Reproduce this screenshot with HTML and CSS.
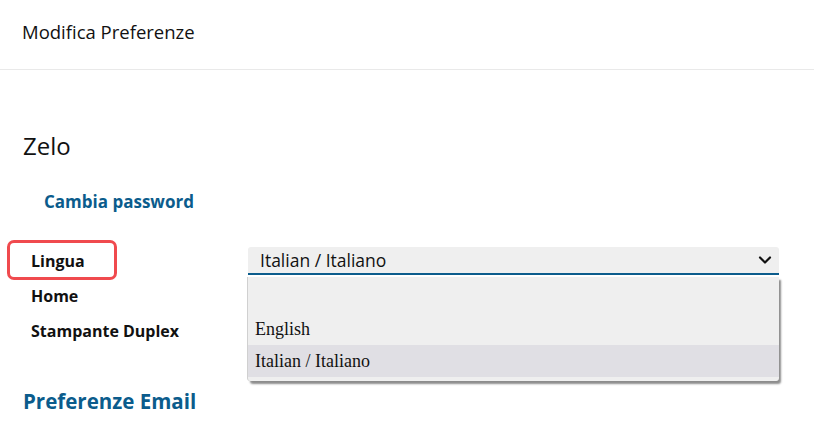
FILE: index.html
```html
<!DOCTYPE html>
<html lang="it">
<head>
<meta charset="utf-8">
<title>Modifica Preferenze</title>
<link rel="stylesheet" href="styles.css">
</head>
<body>
<header class="topbar">Modifica Preferenze</header>
<main class="content">
  <h2 class="user-name">Zelo</h2>
  <a class="change-pw" href="#">Cambia password</a>
  <div class="prefs">
    <div class="pref-row">
      <span class="pref-label highlighted">Lingua</span>
      <div class="select-wrap">
        <div class="select">
          <span class="select-value">Italian / Italiano</span>
          <svg class="chevron" width="14" height="10" viewBox="0 0 14 10"><path d="M2 2.5 L7 7.5 L12 2.5" fill="none" stroke="#111" stroke-width="2.2" stroke-linecap="round" stroke-linejoin="round"/></svg>
        </div>
        <ul class="dropdown">
          <li class="opt"></li>
          <li class="opt">English</li>
          <li class="opt active">Italian / Italiano</li>
        </ul>
      </div>
    </div>
    <div class="pref-row"><span class="pref-label">Home</span></div>
    <div class="pref-row"><span class="pref-label">Stampante Duplex</span></div>
  </div>
  <h2 class="section-title">Preferenze Email</h2>
</main>
</body>
</html>
```
FILE: styles.css
```css
*, *::before, *::after { box-sizing: border-box; }
body {
  margin: 0;
  background: #fff;
  font-family: "Open Sans", "Noto Sans", sans-serif;
  color: #111;
}
.topbar {
  height: 70px;
  padding: 21px 22px 0;
  font-size: 18.5px;
  line-height: 22px;
  border-bottom: 1px solid #e9e9e9;
}
.content {
  padding: 0 23px;
}
.user-name {
  margin: 63px 0 0;
  font-size: 24px;
  font-weight: 400;
  line-height: 26px;
}
.change-pw {
  display: block;
  margin: 32px 0 0 21px;
  font-size: 17px;
  font-weight: 700;
  line-height: 22px;
  color: #0b5c8c;
  text-decoration: none;
}
.prefs {
  margin-top: 30px;
}
.pref-row {
  display: grid;
  grid-template-columns: 217px 531px;
  align-items: center;
  height: 35px;
  padding-left: 8px;
}
.pref-label {
  position: relative;
  font-size: 16px;
  font-weight: 700;
  line-height: 20px;
}
.pref-label.highlighted::before {
  content: "";
  position: absolute;
  left: -24px;
  top: -11px;
  width: 110px;
  height: 40px;
  border: 3px solid #f04a4e;
  border-radius: 7px;
}
.select-wrap {
  position: relative;
}
.select {
  display: flex;
  align-items: center;
  justify-content: space-between;
  height: 28px;
  padding: 0 7px 0 12px;
  background: #efefef;
  border-bottom: 2px solid #0b5c8c;
  border-radius: 3px 3px 0 0;
  font-size: 17.5px;
}
.chevron { display: block; }
.dropdown {
  position: absolute;
  left: 0;
  top: 30px;
  width: 531px;
  margin: 0;
  padding: 4px 0;
  list-style: none;
  background: #efefef;
  border-radius: 0 0 3px 3px;
  box-shadow: -1px 0 0 #d0d0d0, 2px 3px 2px rgba(0, 0, 0, 0.45);
  font-family: "Liberation Serif", "Times New Roman", serif;
  font-size: 18px;
  font-weight: 400;
}
.opt {
  height: 32px;
  line-height: 32px;
  padding-left: 7px;
}
.opt.active {
  background: #e0dfe4;
}
.section-title {
  margin: 39px 0 0;
  font-size: 20.5px;
  font-weight: 700;
  line-height: 28px;
  color: #0b5c8c;
}
```
